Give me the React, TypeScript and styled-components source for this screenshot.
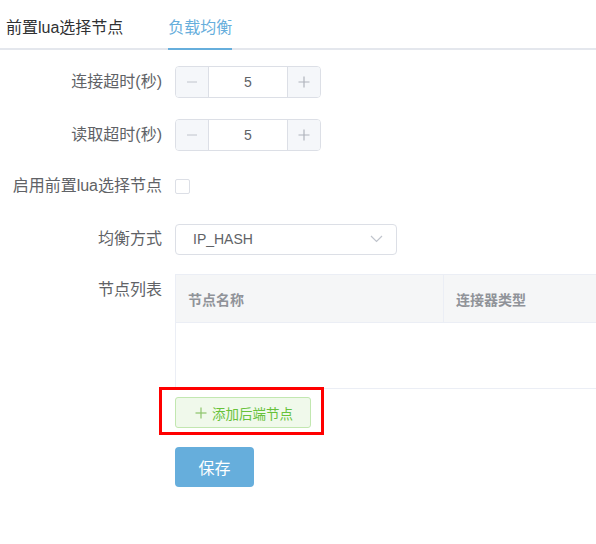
import React from "react";
import styled, { createGlobalStyle } from "styled-components";

const GlobalStyle = createGlobalStyle`
  html, body {
    margin: 0;
    padding: 0;
    background: #ffffff;
    overflow: hidden;
  }
  body {
    font-family: "Liberation Sans", "Noto Sans CJK SC", sans-serif;
    color: #606266;
  }
  * { box-sizing: border-box; }
`;

const Page = styled.div`
  width: 596px;
  height: 544px;
  overflow: hidden;
`;

const TabBar = styled.div`
  display: flex;
  padding-left: 6px;
  border-bottom: 2px solid #e4e7ed;
  height: 50px;
`;

const Tab = styled.div<{ $active?: boolean }>`
  height: 50px;
  padding-top: 8px;
  line-height: 40px;
  font-size: 16px;
  margin-right: 45px;
  color: ${(p) => (p.$active ? "#66aedc" : "#303133")};
  border-bottom: 2px solid ${(p) => (p.$active ? "#66aedc" : "transparent")};
  margin-bottom: -2px;
`;

const Form = styled.div`
  padding-top: 16px;
  display: flex;
  flex-direction: column;
`;

const Row = styled.div<{ $mb?: number }>`
  display: flex;
  align-items: flex-start;
  margin-bottom: ${(p) => (p.$mb ?? 20)}px;
`;

const Label = styled.div`
  width: 175px;
  flex: none;
  padding-right: 13px;
  text-align: right;
  line-height: 32px;
  font-size: 16px;
  color: #606266;
  white-space: nowrap;
`;

const Content = styled.div`
  flex: 1;
  min-width: 0;
  min-height: 32px;
  display: flex;
  flex-direction: column;
  align-items: flex-start;
  justify-content: center;
`;

const NumberBox = styled.div`
  display: flex;
  width: 146px;
  height: 32px;
  border: 1px solid #dcdfe6;
  border-radius: 4px;
  overflow: hidden;
`;

const StepButton = styled.div<{ $side: "left" | "right" }>`
  width: 33px;
  flex: none;
  background: #f5f7fa;
  display: flex;
  align-items: center;
  justify-content: center;
  ${(p) =>
    p.$side === "left"
      ? "border-right: 1px solid #dcdfe6;"
      : "border-left: 1px solid #dcdfe6;"}
`;

const NumberValue = styled.div`
  flex: 1;
  text-align: center;
  line-height: 30px;
  font-size: 14px;
  color: #606266;
`;

const Checkbox = styled.span`
  display: inline-block;
  width: 15px;
  height: 15px;
  border: 1px solid #dcdfe6;
  border-radius: 2px;
  background: #fff;
`;

const Select = styled.div`
  width: 222px;
  height: 31px;
  border: 1px solid #dcdfe6;
  border-radius: 4px;
  display: flex;
  align-items: center;
  justify-content: space-between;
  padding: 0 13px 0 17px;
  font-size: 14px;
  color: #606266;
`;

const Table = styled.div`
  width: 480px;
  border-top: 1px solid #ebeef5;
  border-left: 1px solid #ebeef5;
  border-bottom: 1px solid #ebeef5;
`;

const HeaderRow = styled.div`
  display: flex;
  height: 48px;
  background: #f5f6f7;
  border-bottom: 1px solid #ebeef5;
`;

const HeaderCell = styled.div<{ $w?: number }>`
  ${(p) => (p.$w ? `width: ${p.$w}px; flex: none;` : "flex: 1;")}
  padding-left: 12px;
  display: flex;
  align-items: center;
  font-size: 14px;
  font-weight: bold;
  color: #909399;
  & + & {
    border-left: 1px solid #ebeef5;
  }
`;

const EmptyBody = styled.div`
  height: 65px;
`;

const AddWrap = styled.div`
  position: relative;
  margin-top: 8px;
  &::after {
    content: "";
    position: absolute;
    top: -10px;
    left: -16px;
    right: -13px;
    bottom: -7px;
    border: 3px solid #ff0000;
    pointer-events: none;
  }
`;

const AddButton = styled.button`
  display: flex;
  align-items: center;
  gap: 5px;
  width: 136px;
  height: 31px;
  padding: 0 0 0 19px;
  background: #f0f9eb;
  border: 1px solid #c2e7b0;
  border-radius: 3px;
  color: #67c23a;
  font-family: "Liberation Sans", "Noto Sans CJK SC", sans-serif;
  font-size: 13.5px;
`;

const SaveButton = styled.button`
  margin-top: 19px;
  width: 79px;
  height: 40px;
  border: none;
  border-radius: 4px;
  background: #66aedc;
  color: #ffffff;
  font-family: "Liberation Sans", "Noto Sans CJK SC", sans-serif;
  font-size: 16px;
  padding: 0;
`;

const Minus = () => (
  <svg width="12" height="12" viewBox="0 0 12 12">
    <line x1="1" y1="6" x2="11" y2="6" stroke="#c0c4cc" strokeWidth="1" />
  </svg>
);

const Plus = ({ color = "#a0a4ac" }: { color?: string }) => (
  <svg width="12" height="12" viewBox="0 0 12 12">
    <line x1="0.5" y1="6" x2="11.5" y2="6" stroke={color} strokeWidth="1.2" />
    <line x1="6" y1="0.5" x2="6" y2="11.5" stroke={color} strokeWidth="1.2" />
  </svg>
);

const Chevron = () => (
  <svg width="13" height="8" viewBox="0 0 13 8">
    <polyline points="1,1 6.5,6.5 12,1" fill="none" stroke="#c0c4cc" strokeWidth="1.2" />
  </svg>
);

const NumberInput = ({ value }: { value: number }) => (
  <NumberBox>
    <StepButton $side="left">
      <Minus />
    </StepButton>
    <NumberValue>{value}</NumberValue>
    <StepButton $side="right">
      <Plus color="#b0b4bc" />
    </StepButton>
  </NumberBox>
);

export default function App() {
  return (
    <Page>
      <GlobalStyle />
      <TabBar>
        <Tab>前置lua选择节点</Tab>
        <Tab $active>负载均衡</Tab>
      </TabBar>
      <Form>
        <Row $mb={21}>
          <Label>连接超时(秒)</Label>
          <Content>
            <NumberInput value={5} />
          </Content>
        </Row>
        <Row $mb={19}>
          <Label>读取超时(秒)</Label>
          <Content>
            <NumberInput value={5} />
          </Content>
        </Row>
        <Row $mb={21}>
          <Label>启用前置lua选择节点</Label>
          <Content>
            <Checkbox />
          </Content>
        </Row>
        <Row $mb={19}>
          <Label>均衡方式</Label>
          <Content>
            <Select>
              <span>IP_HASH</span>
              <Chevron />
            </Select>
          </Content>
        </Row>
        <Row>
          <Label>节点列表</Label>
          <Content>
            <Table>
              <HeaderRow>
                <HeaderCell $w={267}>节点名称</HeaderCell>
                <HeaderCell>连接器类型</HeaderCell>
              </HeaderRow>
              <EmptyBody />
            </Table>
            <AddWrap>
              <AddButton>
                <Plus color="#8cc46a" />
                <span>添加后端节点</span>
              </AddButton>
            </AddWrap>
            <SaveButton>保存</SaveButton>
          </Content>
        </Row>
      </Form>
    </Page>
  );
}
